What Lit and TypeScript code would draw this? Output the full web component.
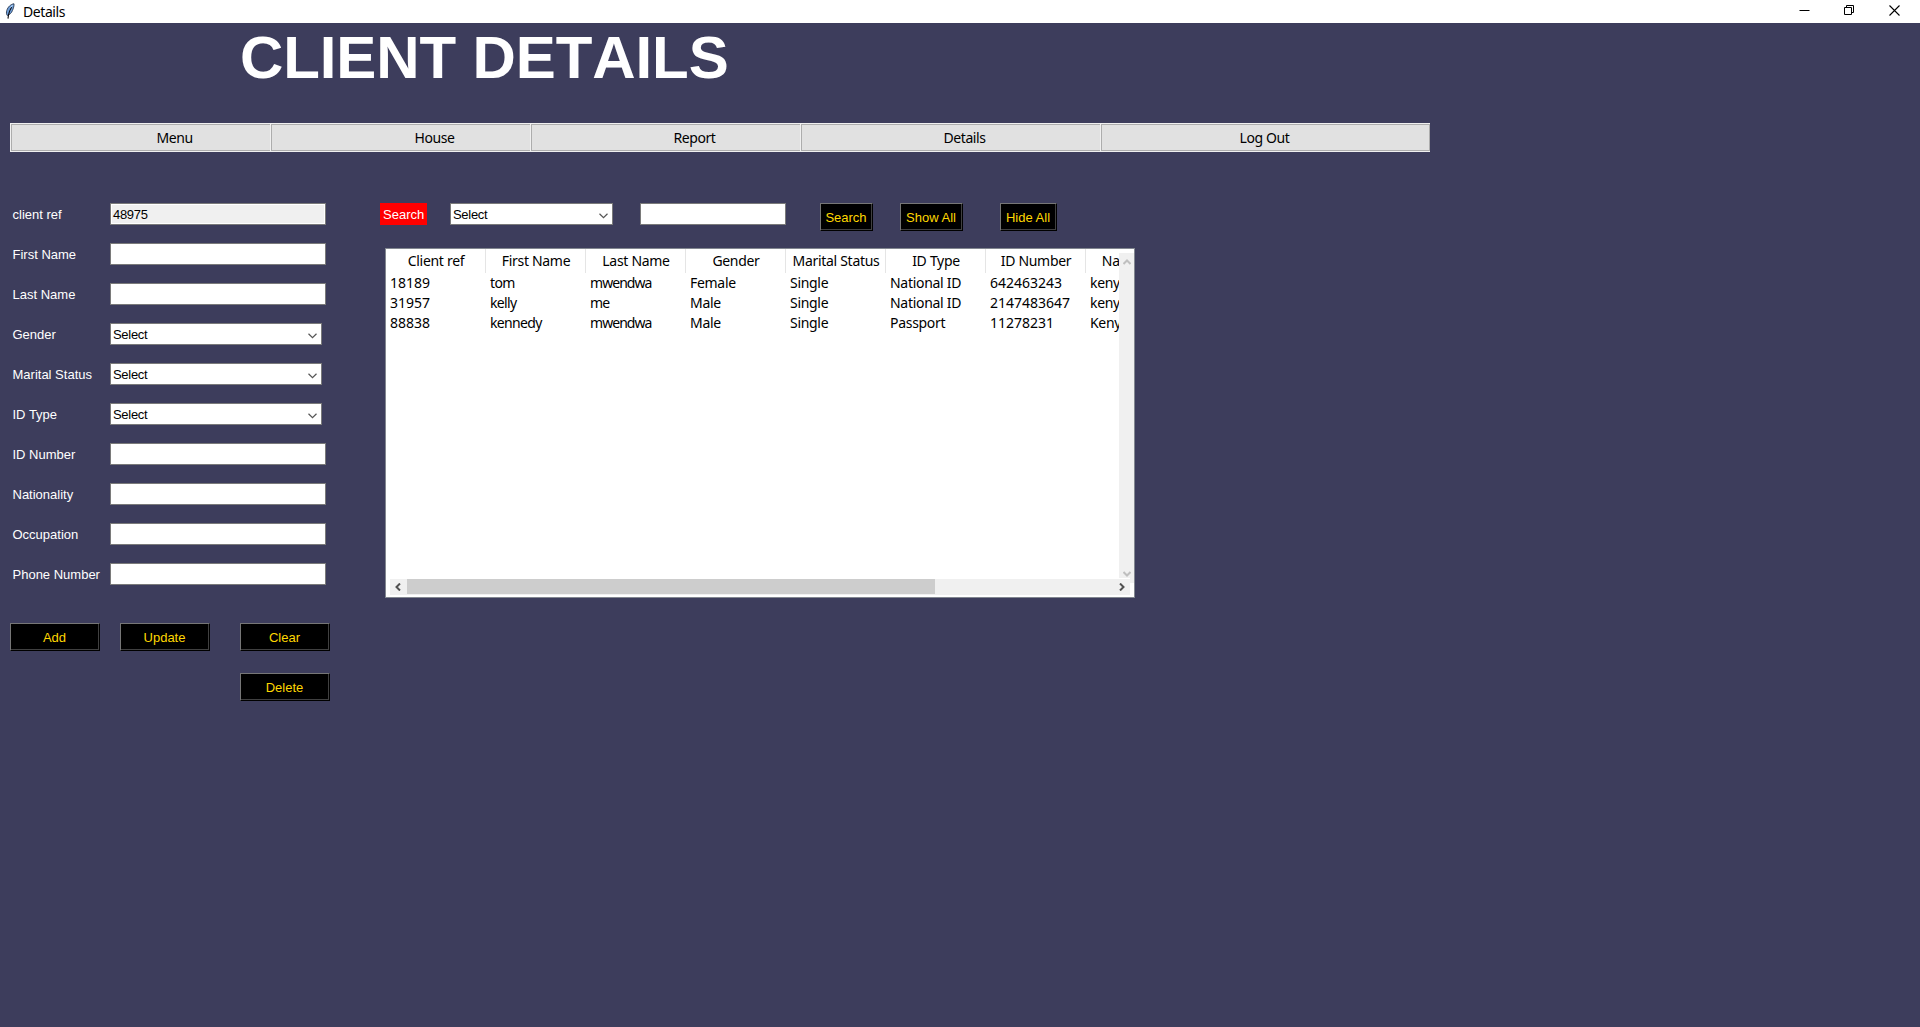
import { LitElement, html, css, svg, nothing } from "lit";
import { customElement } from "lit/decorators.js";

type Field = { label: string; kind: "entry" | "combo" | "locked"; value?: string };

const FIELDS: Field[] = [
  { label: "client ref", kind: "locked", value: "48975" },
  { label: "First Name", kind: "entry" },
  { label: "Last Name", kind: "entry" },
  { label: "Gender", kind: "combo", value: "Select" },
  { label: "Marital Status", kind: "combo", value: "Select" },
  { label: "ID Type", kind: "combo", value: "Select" },
  { label: "ID Number", kind: "entry" },
  { label: "Nationality", kind: "entry" },
  { label: "Occupation", kind: "entry" },
  { label: "Phone Number", kind: "entry" },
];

const MENU = [
  { label: "Menu", width: 260 },
  { label: "House", width: 260 },
  { label: "Report", width: 270 },
  { label: "Details", width: 300 },
  { label: "Log Out", width: 330 },
];

const COLUMNS = ["Client ref", "First Name", "Last Name", "Gender", "Marital Status", "ID Type", "ID Number", "Nationality"];
const ROWS = [
  ["18189", "tom", "mwendwa", "Female", "Single", "National ID", "642463243", "kenyan"],
  ["31957", "kelly", "me", "Male", "Single", "National ID", "2147483647", "kenyan"],
  ["88838", "kennedy", "mwendwa", "Male", "Single", "Passport", "11278231", "Kenyan"],
];
const COLUMN_TONE = ["num", "name", "tight", "", "", "", "num", ""];

const chevron = svg`<path d="M0.5 0.8 L4.5 4.6 L8.5 0.8" fill="none" stroke="#555" stroke-width="1.2"/>`;

@customElement("app-root")
export class AppRoot extends LitElement {
  static styles = css`
    :host { display: block; width: 1920px; height: 1027px; overflow: hidden; background: #3d3d5c;
      font: 13px/16px "Liberation Sans", Arial, sans-serif; color: #fff; }
    * { box-sizing: border-box; }
    svg { display: block; }
    .titlebar { height: 23px; background: #fff; color: #000; display: flex; align-items: center; padding-left: 5px; }
    .feather { margin: -1px 8px 0 0; }
    .caption { flex: 1; font: 14px/18px "Noto Sans", sans-serif; letter-spacing: -0.42px; padding-top: 1px; }
    .controls { display: flex; padding-right: 20px; gap: 34px; margin-top: -3px; }
    h1 { margin: 0; padding: 0 0 0 240px; height: 100px; font: bold 60px/69px "Liberation Sans", Arial, sans-serif; letter-spacing: -0.1px; font-kerning: none; white-space: nowrap; }
    .menu { display: flex; width: 1420px; height: 29px; margin-left: 10px; border: solid #f0f0f0; border-width: 1px 1px 1px 0; }
    .item { border: 1px solid #adadad; border-right: 0; box-shadow: -1px 0 #f0f0f0; margin-left: 1px; flex: none; background: #e1e1e1; color: #000;
      font: 14px/25px "Noto Sans", sans-serif; letter-spacing: -0.42px; }
    .item:last-child { border-right: 1px solid #adadad; }
    .item span { display: block; width: 325px; text-align: center; white-space: nowrap; }
    .body { display: flex; padding: 51px 0 0 10px; align-items: flex-start; }
    .left { width: 370px; }
    .row { display: flex; height: 40px; align-items: flex-start; }
    .label { width: 100px; padding: 3px 0 0 2.5px; line-height: 17px; white-space: nowrap; }
    .box { height: 22px; background: #fff; border: 1px solid #7a7a7a; color: #000; padding: 2px 4px 0 2px; line-height: 17px; display: flex; justify-content: space-between; letter-spacing: -0.3px; }
    .entry { width: 216px; }
    .locked { background: #f0f0f0; box-shadow: inset 0 0 0 1px #fff; }
    .combo { width: 212px; }
    .box svg { margin-top: 7px; }
    .btn { height: 28px; width: 90px; background: #000; color: #ffd700; border: solid 1px; border-color: #767676 #000 #000 #767676;
      box-shadow: inset -1px -1px #404040; display: block; text-align: center; line-height: 17px; padding: 1px 1px 0 0; font-size: 13px; font-family: inherit; white-space: nowrap; }
    .actions { display: grid; grid-template-columns: 110px 120px 90px; row-gap: 22px; margin-top: 20px; }
    .del { grid-column: 3; }
    .tools { display: flex; align-items: flex-start; height: 45px; }
    .tag { background: #f00; width: 47px; height: 22px; padding: 3px 0 0 3px; line-height: 17px; margin-right: 23px; }
    .by { width: 163px; margin-right: 27px; }
    .query { width: 146px; margin-right: 34px; }
    .find { width: 53px; margin-right: 27px; }
    .show { width: 63px; margin-right: 37px; }
    .hide { width: 57px; }
    .tree { position: relative; margin-left: 5px; width: 750px; height: 350px; background: #fff; border: 1px solid #828790; color: #000;
      font: 14px/20px "Noto Sans", sans-serif; overflow: hidden; }
    .cells { display: grid; grid-template-columns: repeat(8, 100px); width: 733px; overflow: hidden; letter-spacing: -0.3px; white-space: nowrap; }
    .head { height: 24px; line-height: 24px; text-align: center; border-right: 1px solid #e5e5e5; padding-left: 1px; }
    .cell { height: 20px; padding-left: 4px; }
    .num { letter-spacing: -0.02px; }
    .name { letter-spacing: -0.65px; }
    .tight { letter-spacing: -0.95px; }
    .vbar { position: absolute; right: -1px; top: 4px; width: 16px; height: 330px; background: #f0f0f0; display: flex; flex-direction: column; justify-content: space-between; align-items: center; padding: 6px 1px 6px 0; }
    .hbar { position: absolute; left: 4px; top: 329px; width: 740px; height: 17px; border-top: 1px solid #fff; background: #f0f0f0; display: flex; align-items: center; justify-content: space-between; padding: 0 5px; }
    .thumb { width: 528px; height: 15px; background: #cdcdcd; margin: 0 auto 1px 6px; }
  `;

  private box(f: Field, extra = "") {
    const kind = f.kind === "locked" ? "entry locked" : f.kind;
    return html`<div class="box ${extra || kind}"><span>${f.value ?? nothing}</span>${f.kind === "combo" ? html`<svg width="9" height="6">${chevron}</svg>` : nothing}</div>`;
  }

  render() {
    return html`
      <header class="titlebar">
        <svg class="feather" width="10" height="17" viewBox="0 0 10 17">
          <path d="M9 0.8 C6 1 2.8 4 1.8 7.4 C1.2 9.5 1.4 11.3 2.2 12.4 C4.5 11.8 6.6 10 7.4 7.6 C8.4 5.4 9.2 3 9 0.8Z" fill="#6fa0dc" stroke="#2b3a50" stroke-width="0.9"/>
          <path d="M6.8 4 C5 6.6 3.4 9.6 3 15.6" fill="none" stroke="#0b0b10" stroke-width="1.1"/>
          <path d="M7.6 2 L5.6 4.6" stroke="#b9d6f5" stroke-width="1"/>
        </svg>
        <span class="caption">Details</span>
        <div class="controls">
          <svg width="11" height="11"><path d="M0.5 5.5H10.5" stroke="#000"/></svg>
          <svg width="11" height="11"><path d="M0.5 2.5H7.5V9.5H0.5ZM2.5 2.5V0.5H9.5V7.5H7.5" fill="none" stroke="#000"/></svg>
          <svg width="11" height="11"><path d="M0.5 0.5L10.5 10.5M10.5 0.5L0.5 10.5" stroke="#000" stroke-width="1.1"/></svg>
        </div>
      </header>
      <h1>CLIENT DETAILS</h1>
      <nav class="menu">
        ${MENU.map((m) => html`<div class="item" style="width:${m.width - 1}px"><span>${m.label}</span></div>`)}
      </nav>
      <main class="body">
        <section class="left">
          ${FIELDS.map((f) => html`<div class="row"><span class="label">${f.label}</span>${this.box(f)}</div>`)}
          <div class="actions">
            <button class="btn">Add</button>
            <button class="btn">Update</button>
            <button class="btn">Clear</button>
            <button class="btn del">Delete</button>
          </div>
        </section>
        <section>
          <div class="tools">
            <span class="tag">Search</span>
            ${this.box({ label: "", kind: "combo", value: "Select" }, "by")}
            ${this.box({ label: "", kind: "entry" }, "query")}
            <button class="btn find">Search</button>
            <button class="btn show">Show All</button>
            <button class="btn hide">Hide All</button>
          </div>
          <div class="tree">
            <div class="cells">
              ${COLUMNS.map((c) => html`<span class="head">${c}</span>`)}
              ${ROWS.map((r) => r.map((v, i) => html`<span class="cell ${COLUMN_TONE[i]}">${v}</span>`))}
            </div>
            <div class="vbar">
              <svg width="8" height="6"><path d="M0.5 5 L4 1.5 L7.5 5" fill="none" stroke="#bfbfbf" stroke-width="2"/></svg>
              <svg width="8" height="6"><path d="M0.5 1 L4 4.5 L7.5 1" fill="none" stroke="#bfbfbf" stroke-width="2"/></svg>
            </div>
            <div class="hbar">
              <svg width="6" height="8"><path d="M5 0.5 L1.5 4 L5 7.5" fill="none" stroke="#505050" stroke-width="2"/></svg>
              <div class="thumb"></div>
              <svg width="6" height="8"><path d="M1 0.5 L4.5 4 L1 7.5" fill="none" stroke="#505050" stroke-width="2"/></svg>
            </div>
          </div>
        </section>
      </main>
    `;
  }
}
